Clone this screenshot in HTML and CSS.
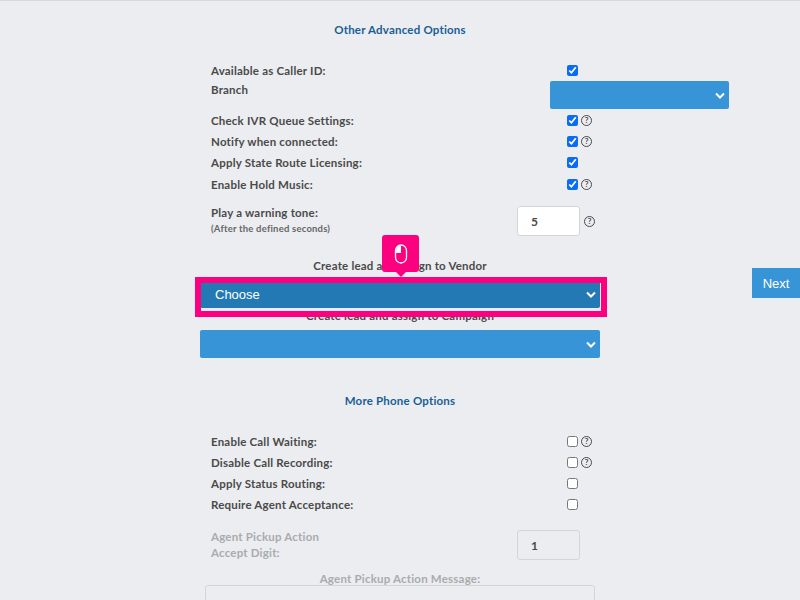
FILE: index.html
```html
<!DOCTYPE html>
<html lang="en">
<head>
    <meta charset="UTF-8">
    <meta name="viewport" content="width=device-width, initial-scale=1.0">
    <title>Phone Options</title>
    <link rel="stylesheet" href="styles.css">
</head>
<body>

    <div class="form">
        <h3 class="section-title first">Other Advanced Options</h3>

        <div class="row h-21"><label>Available as Caller ID:</label><input type="checkbox" checked></div>
        <div class="row h-28">
            <label class="label-top">Branch</label>
            <select class="select select-branch"><option></option></select>
        </div>
        <div class="row h-22"><label>Check IVR Queue Settings:</label><input type="checkbox" checked><span class="help">?</span></div>
        <div class="row h-21"><label>Notify when connected:</label><input type="checkbox" checked><span class="help">?</span></div>
        <div class="row h-21"><label>Apply State Route Licensing:</label><input type="checkbox" checked></div>
        <div class="row h-22"><label>Enable Hold Music:</label><input type="checkbox" checked><span class="help">?</span></div>

        <div class="row row-input">
            <label>Play a warning tone:<small>(After the defined seconds)</small></label>
            <input class="number" type="text" value="5">
            <span class="help help-input">?</span>
        </div>

        <div class="stacked">
            <div class="stacked-label">Create lead and assign to Vendor</div>
            <select class="select select-active"><option>Choose</option></select>
            <div class="stacked-label">Create lead and assign to Campaign</div>
            <select class="select"><option></option></select>

            <!-- tutorial highlight on top of the vendor select -->
            <div class="highlight"></div>
            <div class="pointer">
                <svg width="14" height="20" viewBox="0 0 14 20">
                    <rect x="1.5" y="1" width="11" height="18" rx="5.5" fill="none" stroke="#fff" stroke-width="1.3"/>
                    <path d="M7 1.5C4 1.5 2 3.5 2 6.5V9H7Z" fill="#fff"/>
                </svg>
            </div>
        </div>

        <h3 class="section-title second">More Phone Options</h3>

        <div class="row h-21"><label>Enable Call Waiting:</label><input type="checkbox"><span class="help">?</span></div>
        <div class="row h-21"><label>Disable Call Recording:</label><input type="checkbox"><span class="help">?</span></div>
        <div class="row h-21"><label>Apply Status Routing:</label><input type="checkbox"></div>
        <div class="row h-21"><label>Require Agent Acceptance:</label><input type="checkbox"></div>

        <div class="row row-disabled">
            <label>Agent Pickup Action<br>Accept Digit:</label>
            <input class="number" type="text" value="1" disabled>
        </div>
        <div class="stacked-label disabled-label">Agent Pickup Action Message:</div>
        <div class="message-box"></div>
    </div>

    <button class="next">Next</button>

</body>
</html>
```

FILE: styles.css
```css
body {
    margin: 0;
    height: 600px;
    box-sizing: border-box;
    overflow: hidden;
    position: relative;
    background-color: #ecedf0;
    border-top: 1px solid #d9d9db;
    font-family: "Lato", "Liberation Sans", sans-serif;
    color: #4a4a4a;
}

.form {
    width: 400px;
    margin: 0 auto;
}

.section-title {
    margin: 0;
    font-size: 11.5px;
    line-height: 16px;
    font-weight: 700;
    letter-spacing: 0.2px;
    text-align: center;
    color: #1a5e96;
}

.section-title.first {
    padding: 21px 0 22px;
}

.section-title.second {
    padding: 35px 0 22px;
}

.row {
    display: flex;
    align-items: center;
    padding-left: 11px;
}

.h-21 { height: 21px; }
.h-22 { height: 22px; }
.h-28 { height: 28px; }

.row label {
    width: 356px;
    flex-shrink: 0;
    font-size: 11.5px;
    font-weight: 700;
    letter-spacing: 0.2px;
}

.row .label-top {
    align-self: flex-start;
    line-height: 18px;
}

.row input[type="checkbox"] {
    width: 11px;
    height: 11px;
    margin: 0;
    accent-color: #0a6cf5;
}

.help {
    width: 9px;
    height: 9px;
    margin-left: 3px;
    border: 1px solid #4a4a4a;
    border-radius: 50%;
    font-size: 8px;
    line-height: 9px;
    font-weight: 700;
    text-align: center;
}

.select {
    display: block;
    width: 400px;
    height: 28px;
    padding: 0 30px 0 15px;
    border: none;
    border-radius: 2px;
    appearance: none;
    background-color: #3795d7;
    background-image: url("data:image/svg+xml,%3Csvg xmlns='http://www.w3.org/2000/svg' width='10' height='7' viewBox='0 0 10 7'%3E%3Cpath d='M1 1.5l4 4 4-4' fill='none' stroke='%23fff' stroke-width='2'/%3E%3C/svg%3E");
    background-repeat: no-repeat;
    background-position: right 4px center;
    font-family: "Liberation Sans", sans-serif;
    font-size: 13px;
    color: #fff;
}

.select-branch {
    width: 179px;
    margin-left: -17px;
    flex-shrink: 0;
}

.select-active {
    background-color: #2379b3;
}

.row-input {
    height: 44px;
    margin-top: 4px;
}

.row-input label {
    line-height: 16px;
}

.row small {
    display: block;
    font-size: 9.5px;
    font-weight: 700;
    color: #666;
}

.number {
    box-sizing: border-box;
    width: 63px;
    height: 30px;
    margin-left: -50px;
    padding: 0 0 0 13px;
    border: 1px solid #d5d5d8;
    border-radius: 3px;
    background: #fff;
    font-family: "Lato", sans-serif;
    font-size: 12px;
    font-weight: 700;
    color: #4a4a4a;
}

.help-input {
    margin-left: 4px;
}

.stacked {
    position: relative;
    padding-top: 15px;
}

.stacked-label {
    height: 22px;
    font-size: 11.5px;
    line-height: 16px;
    font-weight: 700;
    letter-spacing: 0.2px;
    text-align: center;
}

.highlight {
    position: absolute;
    left: -5px;
    top: 34px;
    width: 400px;
    height: 28px;
    border: 6px solid #fd007f;
    pointer-events: none;
}

.pointer {
    position: absolute;
    left: 182px;
    top: -8px;
    width: 37px;
    height: 37px;
    display: flex;
    align-items: center;
    justify-content: center;
    border-radius: 3px;
    background: #fd007f;
}

.pointer::after {
    content: "";
    position: absolute;
    left: 14px;
    bottom: -5px;
    border-left: 5px solid transparent;
    border-right: 5px solid transparent;
    border-top: 5px solid #fd007f;
}

.row-disabled {
    height: 32px;
    margin-top: 14px;
}

.row-disabled label {
    line-height: 16px;
    color: #a9abad;
}

.row-disabled .number {
    background: transparent;
    color: #4a4a4a;
}

.disabled-label {
    margin-top: 10px;
    height: 14px;
    color: #a9abad;
}

.message-box {
    width: 388px;
    height: 40px;
    margin-left: 5px;
    border: 1px solid #d5d5d8;
    border-radius: 3px;
}

.next {
    position: absolute;
    right: 0;
    top: 267px;
    width: 48px;
    height: 30px;
    padding: 0;
    border: none;
    background: #3795d7;
    font-family: "Liberation Sans", sans-serif;
    font-size: 13px;
    color: #fff;
}
```
